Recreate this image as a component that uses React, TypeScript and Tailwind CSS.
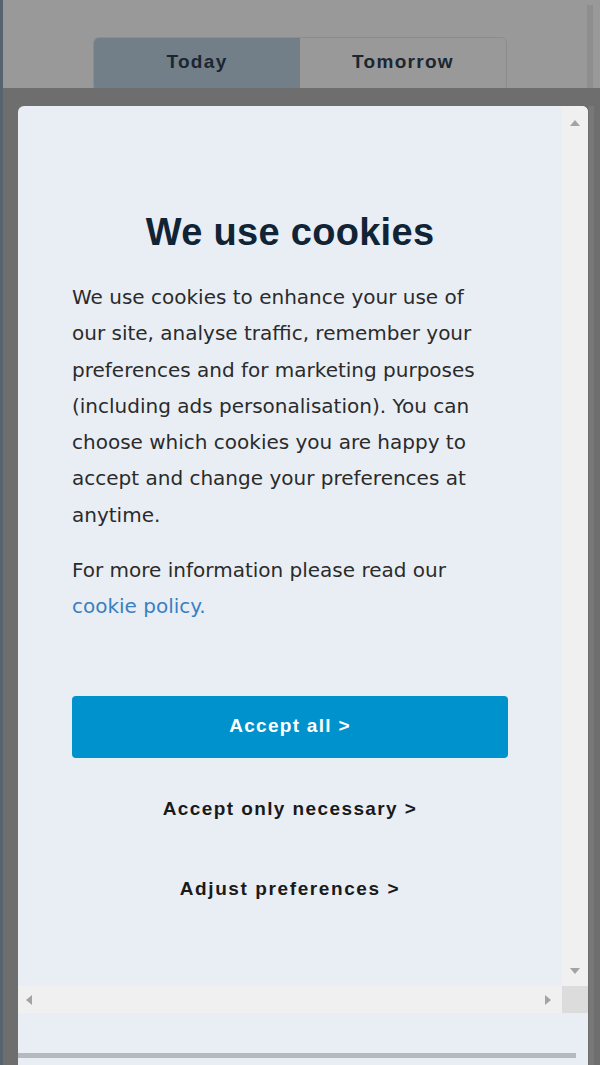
import React from "react";

const BODY_LINES = [
  "We use cookies to enhance your use of",
  "our site, analyse traffic, remember your",
  "preferences and for marketing purposes",
  "(including ads personalisation). You can",
  "choose which cookies you are happy to",
  "accept and change your preferences at",
  "anytime.",
];

function Arrow({ dir }: { dir: "up" | "down" | "left" | "right" }) {
  const points = {
    up: "0,6 5,0 10,6",
    down: "0,0 10,0 5,6",
    left: "6,0 6,10 0,5",
    right: "0,0 0,10 6,5",
  }[dir];
  const vertical = dir === "up" || dir === "down";
  return (
    <svg
      width={vertical ? 10 : 6}
      height={vertical ? 6 : 10}
      viewBox={vertical ? "0 0 10 6" : "0 0 6 10"}
    >
      <polygon points={points} fill="#a3a3a3" />
    </svg>
  );
}

export default function App() {
  return (
    <div
      className="w-[600px] h-[1065px] flex overflow-hidden bg-[#999999]"
      style={{ fontFamily: '"Liberation Sans", Arial, sans-serif' }}
    >
      {/* left edge */}
      <div className="w-[3px] shrink-0 bg-[#56646f]" />

      <div className="flex-1 flex flex-col">
        {/* Tabs behind the overlay */}
        <div className="h-[88px] shrink-0 flex overflow-hidden">
          <div className="flex-1 flex justify-center pt-[37px] pl-[10px]">
            <div className="w-[414px] h-[55px] flex rounded-[6px] overflow-hidden border border-[#8c8c8c]">
              <div className="flex-1 bg-[#737f88] flex items-center justify-center pb-[4px] text-[19px] font-bold tracking-[1.3px] text-[#1b2631]">
                Today
              </div>
              <div className="flex-1 bg-[#999999] flex items-center justify-center pb-[4px] text-[19px] font-bold tracking-[1.3px] text-[#1b2631]">
                Tomorrow
              </div>
            </div>
          </div>
          <div className="w-[13px] shrink-0 flex">
            <div className="w-[6px] bg-[#8e8e8e] mt-[5px]" />
          </div>
        </div>

        {/* Dark overlay with modal */}
        <div className="flex-1 bg-[#6e6e6e] flex pl-[15px] pt-[18px]">
          <div className="w-[570px] shrink-0 rounded-t-[6px] overflow-hidden bg-[#e9eef5] flex flex-col">
            <div className="h-[880px] flex">
              {/* content */}
              <div className="flex-1 flex flex-col items-center pt-[103px] px-[54px]">
                <h1 className="text-[38px] leading-[46px] font-bold text-[#102436] tracking-[0.3px]">
                  We use cookies
                </h1>
                <div
                  className="self-stretch mt-[24px] text-[20px] leading-[36.3px] text-[#2b2b2b]"
                  style={{ fontFamily: '"DejaVu Sans", sans-serif' }}
                >
                  <p>
                    {BODY_LINES.map((line) => (
                      <span key={line} className="block whitespace-nowrap">
                        {line}
                      </span>
                    ))}
                  </p>
                  <p className="mt-[19px]">
                    <span className="block">For more information please read our</span>
                    <a className="text-[#3a7fc0]">cookie policy.</a>
                  </p>
                </div>

                <button className="self-stretch mt-[71px] h-[62px] rounded-[4px] bg-[#0092cc] text-white text-[19px] font-bold tracking-[1.3px]">
                  Accept all &gt;
                </button>
                <button className="mt-[32px] h-[40px] text-[19px] font-bold tracking-[1.4px] text-[#1a1a1a]">
                  Accept only necessary &gt;
                </button>
                <button className="mt-[40px] h-[40px] text-[19px] font-bold tracking-[1.6px] text-[#1a1a1a]">
                  Adjust preferences &gt;
                </button>
              </div>

              {/* vertical scrollbar */}
              <div className="w-[26px] shrink-0 bg-[#f0f0f0] flex flex-col items-center justify-between pt-[14px] pb-[12px]">
                <Arrow dir="up" />
                <Arrow dir="down" />
              </div>
            </div>

            {/* horizontal scrollbar */}
            <div className="h-[27px] shrink-0 flex">
              <div className="flex-1 bg-[#f0f0f0] flex items-center justify-between pl-[8px] pr-[11px]">
                <Arrow dir="left" />
                <Arrow dir="right" />
              </div>
              <div className="w-[26px] shrink-0 bg-[#dcdcdc]" />
            </div>

            <div className="flex-1 pt-[40px] pr-[12px]">
              <div className="h-[5px] bg-[#b5b9bf]" />
            </div>
          </div>
          <div className="flex-1 flex pl-[1px]">
            <div className="w-[5px] bg-[#787878]" />
          </div>
        </div>
      </div>
    </div>
  );
}
